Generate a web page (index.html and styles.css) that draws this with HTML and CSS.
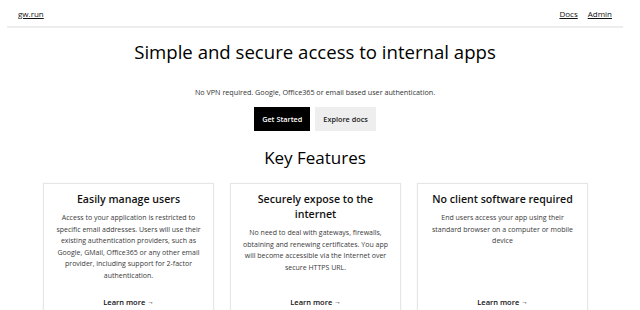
FILE: index.html
```html
<!DOCTYPE html>
<html lang="en">
<head>
<meta charset="UTF-8">
<meta name="viewport" content="width=device-width, initial-scale=1.0"/>
<title>gw.run - Simple and secure access to internal apps</title>
<link rel="stylesheet" href="styles.css">
</head>
<body>
<div class="page">
  <header class="topbar">
    <a class="brand" href="#">gw.run</a>
    <nav class="nav">
      <a href="#">Docs</a>
      <a href="#">Admin</a>
    </nav>
  </header>

  <section class="hero">
    <h1>Simple and secure access to internal apps</h1>
    <p class="lead">No VPN required. Google, Office365 or email based user authentication.</p>
    <div class="actions">
      <a class="btn btn-dark" href="#">Get Started</a>
      <a class="btn btn-light" href="#">Explore docs</a>
    </div>
  </section>

  <!-- features -->
  <section class="features">
    <h2>Key Features</h2>
    <div class="cards">
      <div class="card">
        <h3>Easily manage users</h3>
        <p>Access to your application is restricted to specific email addresses. Users will use their existing authentication providers, such as Google, GMail, Office365 or any other email provider, including support for 2-factor authentication.</p>
        <a class="more" href="#">Learn more <span class="arrow">&#x2192;</span></a>
      </div>
      <div class="card">
        <h3>Securely expose to the internet</h3>
        <p>No need to deal with gateways, firewalls, obtaining and renewing certificates. You app will become accessible via the Internet over secure HTTPS URL.</p>
        <a class="more" href="#">Learn more <span class="arrow">&#x2192;</span></a>
      </div>
      <div class="card">
        <h3>No client software required</h3>
        <p>End users access your app using their standard browser on a computer or mobile device</p>
        <a class="more" href="#">Learn more <span class="arrow">&#x2192;</span></a>
      </div>
    </div>
  </section>
</div>
</body>
</html>
```

FILE: styles.css
```css
body {
  margin: 0;
  font-family: "Open Sans", "Noto Sans", sans-serif;
  color: #111;
  background: #fff;
}
a {
  color: inherit;
}
.page {
  width: 630px;
}

.topbar {
  margin: 0 7px;
  padding: 0 11px;
  height: 26px;
  border-bottom: 2px solid #ededed;
  display: flex;
  align-items: center;
  justify-content: space-between;
  font-size: 8px;
}
.nav {
  display: flex;
  gap: 10px;
}

.hero {
  text-align: center;
}
.hero h1 {
  margin: 11px 0 0;
  font-size: 18.6px;
  line-height: 26px;
  font-weight: 500;
  color: #000;
}
.lead {
  margin: 22px 0 0;
  font-size: 7.2px;
  line-height: 10px;
  color: #333;
}
.actions {
  margin-top: 10px;
  display: flex;
  justify-content: center;
  gap: 5px;
}
.btn {
  display: block;
  height: 24px;
  line-height: 24px;
  padding: 0 8px;
  font-size: 7.3px;
  font-weight: 600;
  text-decoration: none;
}
.btn-dark {
  background: #000;
  color: #fff;
}
.btn-light {
  background: #eee;
  color: #1b1b1b;
}

.features h2 {
  margin: 15px 0 0;
  text-align: center;
  font-size: 17px;
  line-height: 24px;
  font-weight: 500;
  color: #000;
}
.cards {
  margin: 13px 0 0 43px;
  width: 545px;
  display: grid;
  grid-template-columns: repeat(3, 1fr);
  gap: 16px;
}
.card {
  border: 1px solid #e6e6e6;
  box-shadow: 0 0 2px rgba(0,0,0,0.05);
  padding: 8px 10px 20px;
  text-align: center;
  display: flex;
  flex-direction: column;
}
.card h3 {
  margin: 0;
  font-size: 10.6px;
  line-height: 15px;
  font-weight: 600;
}
.card p {
  margin: 5px 0 0;
  font-size: 7px;
  line-height: 11.6px;
  color: #3a3a3a;
}
.more {
  margin-top: auto;
  padding-top: 15px;
  font-size: 7.5px;
  font-weight: 600;
  text-decoration: none;
}
.more .arrow {
  font-size: 6.5px;
  vertical-align: 1px;
}
```
